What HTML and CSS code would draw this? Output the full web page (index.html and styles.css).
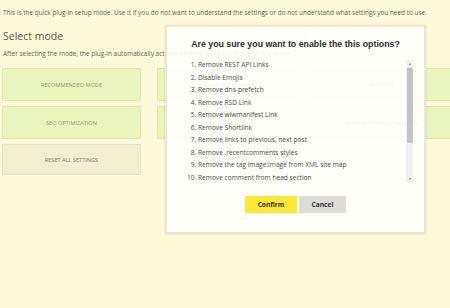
FILE: index.html
```html
<!DOCTYPE html>
<html>
<head>
<meta charset="utf-8">
<link rel="stylesheet" href="styles.css">
</head>
<body>
<div class="page">
  <p class="intro">This is the quick plug-in setup mode. Use it if you do not want to understand the settings or do not understand what settings you need to use.</p>
  <h2 class="heading">Select mode</h2>
  <p class="sub">After selecting the mode, the plug-in automatically activates the necessary settings for the mode.</p>
  <div class="modes">
    <div class="mode green">RECOMMENDED MODE</div>
    <div class="mode green">CODE CLEANING</div>
    <div class="mode green">SECURITY</div>
    <div class="mode green">SEO OPTIMIZATION</div>
    <div class="mode green">DISABLE ALL UPDATES</div>
    <div class="mode green">REMOVE DEFAULT WIDGETS</div>
    <div class="mode reset">RESET ALL SETTINGS</div>
  </div>
</div>

<div class="modal">
  <h3 class="modal-title">Are you sure you want to enable the this options?</h3>
  <div class="list-wrap">
    <div class="list-view">
      <ol class="options">
        <li>Remove REST API Links</li>
        <li>Disable Emojis</li>
        <li>Remove dns-prefetch</li>
        <li>Remove RSD Link</li>
        <li>Remove wlwmanifest Link</li>
        <li>Remove Shortlink</li>
        <li>Remove links to previous, next post</li>
        <li>Remove .recentcomments styles</li>
        <li>Remove the tag image:image from XML site map</li>
        <li>Remove comment from head section</li>
      </ol>
    </div>
    <div class="scrollbar">
      <span class="arrow up"></span>
      <div class="track"><div class="thumb"></div></div>
      <span class="arrow down"></span>
    </div>
  </div>
  <div class="actions">
    <button class="btn confirm">Confirm</button>
    <button class="btn cancel">Cancel</button>
  </div>
</div>
</body>
</html>
```
FILE: styles.css
```css
html, body {
  margin: 0;
  padding: 0;
  background: #fefad9;
}
body {
  width: 450px;
  height: 308px;
  overflow: hidden;
  position: relative;
  font-family: "Open Sans", "Liberation Sans", sans-serif;
  color: #5a5a50;
}
.page {
  padding: 8px 2px 0 3px;
}
.intro, .sub {
  margin: 0;
  font-size: 6.45px;
  line-height: 10px;
  white-space: nowrap;
  color: #5f5f55;
}
.heading {
  margin: 11px 0 6px 0;
  font-size: 10.5px;
  line-height: 14px;
  font-weight: normal;
  color: #555;
}
.modes {
  margin-top: 9px;
  margin-left: -1px;
  display: grid;
  grid-template-columns: 139px 139px 139px;
  grid-template-rows: 33px 33px 31px;
  column-gap: 16px;
  row-gap: 5px;
}
.mode {
  display: flex;
  align-items: center;
  justify-content: center;
  font-size: 5.6px;
  box-sizing: border-box;
}
.green {
  background: #e9f5bd;
  border: 1px solid #d9eaa4;
  color: #8e9673;
}
.reset {
  background: #f3edd2;
  border: 1px solid #e9e2c3;
  color: #857f6a;
}

.modal {
  position: absolute;
  left: 165px;
  top: 25px;
  width: 261px;
  height: 209px;
  box-sizing: border-box;
  background: rgba(255, 255, 253, 0.9);
  border: 2px solid #ebe7d5;
  box-shadow: 0 0 2px rgba(120, 110, 70, 0.25);
  padding: 11px 11px 0 21px;
  display: flex;
  flex-direction: column;
}
.modal-title {
  margin: 0 0 0 -10px;
  font-family: "Liberation Sans", Arial, sans-serif;
  font-weight: bold;
  font-size: 8.8px;
  line-height: 12px;
  color: #2e2e2e;
  text-align: center;
  white-space: nowrap;
}
.list-wrap {
  margin-top: 9px;
  display: flex;
  height: 125px;
}
.list-view {
  flex: 1;
  overflow: hidden;
}
.options {
  margin: 0;
  padding-left: 10px;
  font-size: 6.6px;
  line-height: 12.5px;
  color: #4a4a45;
}
.options li {
  white-space: nowrap;
}
.scrollbar {
  width: 7px;
  display: flex;
  flex-direction: column;
  background: #f1f1f0;
  margin: 1px 0 2px 0;
}
.arrow {
  height: 7px;
  display: flex;
  align-items: center;
  justify-content: center;
}
.arrow::before {
  content: "";
  width: 0;
  height: 0;
  border-left: 1.5px solid transparent;
  border-right: 1.5px solid transparent;
}
.up::before {
  border-bottom: 2px solid #707070;
}
.down::before {
  border-top: 2px solid #707070;
}
.track {
  flex: 1;
  padding-top: 1px;
}
.thumb {
  margin: 0 0.5px;
  height: 75px;
  background: #c3c3c3;
}
.actions {
  margin: 12px 0 0 -10px;
  display: flex;
  justify-content: center;
  gap: 2px;
}
.btn {
  height: 17px;
  border: none;
  padding: 0;
  font-family: "Open Sans", "Liberation Sans", sans-serif;
  font-weight: bold;
  font-size: 6.6px;
  color: #333;
  cursor: pointer;
}
.confirm {
  width: 52px;
  background: #fbe935;
}
.cancel {
  width: 47px;
  background: #dedcd8;
}
```
